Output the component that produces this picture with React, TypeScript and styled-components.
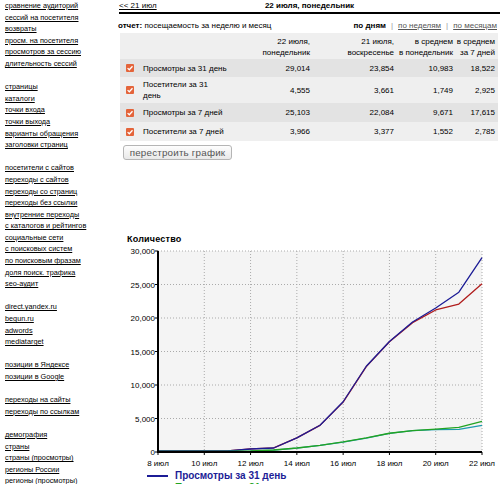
import styled, { createGlobalStyle } from 'styled-components';

const GlobalStyle = createGlobalStyle`
  body {
    margin: 0;
    background: #fff;
    color: #000;
    font-family: "Liberation Sans", Arial, sans-serif;
    font-size: 8px;
  }
`;

const Page = styled.div`
  display: flex;
  width: 500px;
  height: 484px;
  overflow: hidden;
`;

const Sidebar = styled.nav`
  flex-shrink: 0;
  width: 113px;
  padding-left: 5px;
  font-size: 7.3px;
`;

const Group = styled.div`
  display: flex;
  flex-direction: column;
  & + & {
    margin-top: 11.6px;
  }
`;

const SideLink = styled.a`
  color: #000;
  text-decoration: underline;
  line-height: 11.6px;
  white-space: nowrap;
`;

const Main = styled.main`
  width: 382px;
`;

const DayNav = styled.div`
  display: grid;
  grid-template-columns: 1fr auto 1fr;
  margin-left: 1px;
  line-height: 12px;
  border-bottom: 2px solid #000;
`;

const PrevLink = styled.a`
  color: #000;
  text-decoration: underline;
`;

const DayTitle = styled.b`
  font-weight: bold;
`;

const ReportBar = styled.div`
  display: flex;
  justify-content: space-between;
  margin-top: 6px;
  padding-right: 3px;
  line-height: 12px;
`;

const ModeNav = styled.div`
  display: flex;
  gap: 5px;
  color: #999;
`;

const ModeLink = styled.a<{ $active?: boolean }>`
  color: ${(p) => (p.$active ? '#000' : '#555')};
  font-weight: ${(p) => (p.$active ? 'bold' : 'normal')};
  text-decoration: ${(p) => (p.$active ? 'none' : 'underline')};
`;

const Table = styled.table`
  width: 378px;
  margin: 1px 0 0 2px;
  table-layout: fixed;
  border-collapse: collapse;
  font-size: 8px;
`;

const Row = styled.tr<{ $dark?: boolean; $h?: number }>`
  background: ${(p) => (p.$dark ? '#e3e3e3' : '#efefef')};
  height: ${(p) => p.$h ?? 18}px;
`;

const Cell = styled.td<{ $num?: boolean }>`
  padding: 2px 3px;
  line-height: 11px;
  white-space: pre-line;
  text-align: ${(p) => (p.$num ? 'right' : 'left')};
  vertical-align: middle;
`;

const HeadCell = styled.th`
  padding: 3px 3px 1px 0;
  line-height: 11px;
  white-space: nowrap;
  text-align: right;
  font-weight: normal;
  vertical-align: bottom;
`;

const Check = styled.span`
  display: block;
  width: 8px;
  height: 8px;
  margin-left: 3px;
  border-radius: 1px;
  background: #e4643a;
  svg {
    display: block;
  }
`;

const RebuildButton = styled.button`
  display: block;
  margin: 4px 0 0 5px;
  width: 109px;
  height: 15px;
  padding: 0;
  border: 1px solid #b5b5b5;
  border-radius: 3px;
  background: linear-gradient(#fdfdfd, #e9e9e9);
  color: #555;
  font-family: "Liberation Sans", Arial, sans-serif;
  font-size: 9.8px;
  line-height: 13px;
  letter-spacing: 0.2px;
`;

const ChartTitle = styled.div`
  margin: 73px 0 0 9px;
  font-size: 9px;
  line-height: 12px;
  font-weight: bold;
  letter-spacing: 0.2px;
`;

const ChartSvg = styled.svg`
  display: block;
  font-family: "Liberation Sans", Arial, sans-serif;
  font-size: 8px;
`;

const Legend = styled.div`
  display: flex;
  flex-direction: column;
  margin-left: 29px;
`;

const LegendItem = styled.div<{ $color: string }>`
  display: flex;
  align-items: center;
  gap: 7px;
  line-height: 12px;
  color: ${(p) => p.$color};
  font-size: 10px;
  font-weight: bold;
  &::before {
    content: '';
    width: 21px;
    height: 2px;
    background: ${(p) => p.$color};
  }
`;

const sidebarGroups = [
  [
    'сравнение аудиторий',
    'сессий на посетителя',
    'возвраты',
    'просм. на посетителя',
    'просмотров за сессию',
    'длительность сессий',
  ],
  ['страницы', 'каталоги', 'точки входа', 'точки выхода', 'варианты обращения', 'заголовки страниц'],
  [
    'посетители с сайтов',
    'переходы с сайтов',
    'переходы со страниц',
    'переходы без ссылки',
    'внутренние переходы',
    'с каталогов и рейтингов',
    'социальные сети',
    'с поисковых систем',
    'по поисковым фразам',
    'доля поиск. трафика',
    'seo-аудит',
  ],
  ['direct.yandex.ru', 'begun.ru', 'adwords', 'mediatarget'],
  ['позиции в Яндексе', 'позиции в Google'],
  ['переходы на сайты', 'переходы по ссылкам'],
  ['демография', 'страны', 'страны (просмотры)', 'регионы России', 'регионы (просмотры)'],
];

const rows = [
  { label: 'Просмотры за 31 день', values: ['29,014', '23,854', '10,983', '18,522'], h: 18 },
  { label: 'Посетители за 31\nдень', values: ['4,555', '3,661', '1,749', '2,925'], h: 26 },
  { label: 'Просмотры за 7 дней', values: ['25,103', '22,084', '9,671', '17,615'], h: 19 },
  { label: 'Посетители за 7 дней', values: ['3,966', '3,377', '1,552', '2,785'], h: 19 },
];

// chart geometry (svg coordinates)
const PL = 40;
const PR = 364;
const PT = 6;
const PB = 207;
const MAX = 30000;
const DAYS = 15;

const sx = (i: number) => PL + ((PR - PL) * i) / (DAYS - 1);
const sy = (v: number) => PB - ((PB - PT) * v) / MAX;

const series = [
  {
    color: '#b01c1c',
    data: [160, 160, 160, 160, 460, 610, 2100, 3980, 7450, 12750, 16450, 19300, 21200, 22084, 25103],
  },
  {
    color: '#1c1c96',
    data: [150, 150, 150, 150, 450, 600, 2100, 4000, 7500, 12800, 16500, 19400, 21500, 23854, 29014],
  },
  {
    color: '#1d9aae',
    data: [90, 90, 90, 90, 140, 290, 580, 990, 1480, 2080, 2780, 3180, 3350, 3377, 3966],
  },
  {
    color: '#22a322',
    data: [100, 100, 100, 100, 150, 300, 600, 1000, 1500, 2100, 2800, 3200, 3420, 3661, 4555],
  },
];

const yTicks = [0, 5000, 10000, 15000, 20000, 25000, 30000];
const xLabels = ['8 июл', '10 июл', '12 июл', '14 июл', '16 июл', '18 июл', '20 июл', '22 июл'];

const CheckMark = () => (
  <svg width="8" height="8" viewBox="0 0 8 8">
    <path d="M1.6 4.1 L3.3 5.7 L6.5 2.2" fill="none" stroke="#fff" strokeWidth="1.3" />
  </svg>
);

const Chart = () => (
  <ChartSvg width="382" height="225" viewBox="0 0 382 225">
    <rect x={PL} y={PT} width={PR - PL} height={PB - PT} fill="#f4f4f4" />
    {yTicks.slice(1).map((v) => (
      <line key={v} x1={PL} x2={PR} y1={sy(v)} y2={sy(v)} stroke="#aaa" strokeDasharray="1 2" />
    ))}
    {xLabels.map((_, k) =>
      k === 0 ? null : (
        <line key={k} x1={sx(k * 2)} x2={sx(k * 2)} y1={PT} y2={PB} stroke="#aaa" strokeDasharray="1 2" />
      ),
    )}
    {series.map((s) => (
      <polyline
        key={s.color}
        points={s.data.map((v, i) => `${sx(i)},${sy(v)}`).join(' ')}
        fill="none"
        stroke={s.color}
        strokeWidth="1.3"
        strokeLinejoin="round"
      />
    ))}
    <line x1={PL} x2={PL} y1={PT} y2={PB + 1} stroke="#000" strokeWidth="2" />
    <line x1={PL - 1} x2={PR} y1={PB} y2={PB} stroke="#000" strokeWidth="2" />
    {yTicks.map((v) => (
      <g key={v}>
        <line x1={PL - 3} x2={PL} y1={sy(v)} y2={sy(v)} stroke="#000" />
        <text x={PL - 3} y={sy(v) + 3} textAnchor="end" fill="#000">
          {v.toLocaleString('en-US')}
        </text>
      </g>
    ))}
    {xLabels.map((l, k) => (
      <g key={l}>
        <line x1={sx(k * 2)} x2={sx(k * 2)} y1={PB} y2={PB + 3} stroke="#000" />
        <text x={sx(k * 2)} y={PB + 14} textAnchor="middle" fill="#000">
          {l}
        </text>
      </g>
    ))}
  </ChartSvg>
);

const App = () => {
  return (
    <Page>
      <GlobalStyle />
      <Sidebar>
        {sidebarGroups.map((g, i) => (
          <Group key={i}>
            {g.map((t) => (
              <SideLink key={t} href="#">
                {t}
              </SideLink>
            ))}
          </Group>
        ))}
      </Sidebar>
      <Main>
        <DayNav>
          <div>
            <PrevLink href="#">&lt;&lt; 21 июл</PrevLink>
          </div>
          <DayTitle>22 июля, понедельник</DayTitle>
          <div />
        </DayNav>
        <ReportBar>
          <span>
            <b>отчет:</b> посещаемость за неделю и месяц
          </span>
          <ModeNav>
            <ModeLink $active>по дням</ModeLink>|<ModeLink href="#">по неделям</ModeLink>|
            <ModeLink href="#">по месяцам</ModeLink>
          </ModeNav>
        </ReportBar>
        <Table>
          <colgroup>
            <col style={{ width: 20 }} />
            <col style={{ width: 90 }} />
            <col style={{ width: 83 }} />
            <col style={{ width: 84 }} />
            <col style={{ width: 59 }} />
            <col style={{ width: 42 }} />
          </colgroup>
          <thead>
            <Row $h={26}>
              <HeadCell />
              <HeadCell />
              <HeadCell>
                22 июля,
                <br />
                понедельник
              </HeadCell>
              <HeadCell>
                21 июля,
                <br />
                воскресенье
              </HeadCell>
              <HeadCell>
                в среднем
                <br />в понедельник
              </HeadCell>
              <HeadCell>
                в среднем
                <br />
                за 7 дней
              </HeadCell>
            </Row>
          </thead>
          <tbody>
            {rows.map((r, i) => (
              <Row key={r.label} $dark={i % 2 === 0} $h={r.h}>
                <Cell>
                  <Check>
                    <CheckMark />
                  </Check>
                </Cell>
                <Cell>{r.label}</Cell>
                {r.values.map((v, j) => (
                  <Cell key={j} $num>
                    {v}
                  </Cell>
                ))}
              </Row>
            ))}
          </tbody>
        </Table>
        <RebuildButton>перестроить график</RebuildButton>
        <ChartTitle>Количество</ChartTitle>
        <Chart />
        <Legend>
          <LegendItem $color="#1c1c96">Просмотры за 31 день</LegendItem>
          <LegendItem $color="#22a322">Посетители за 31 день</LegendItem>
        </Legend>
      </Main>
    </Page>
  );
};

export default App;
